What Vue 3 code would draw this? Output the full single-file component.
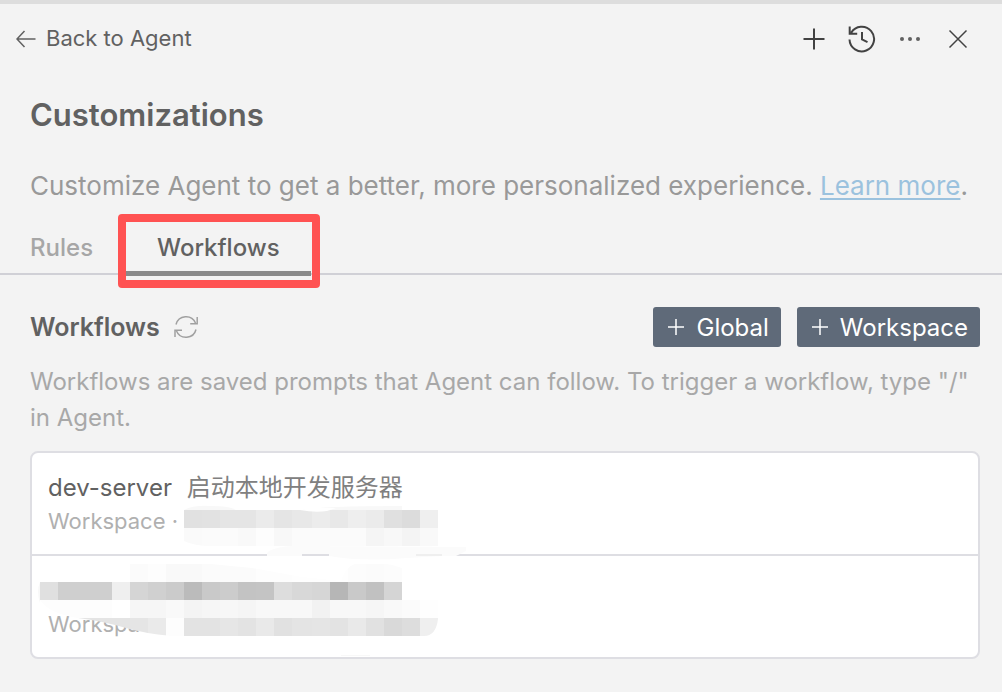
<script setup>
import { ref } from 'vue'

const tab = ref('workflows')

const size = 18
const shades = [
  { row: 0, start: 8, values: ['e1', 'e2', 'e5', 'e5', 'eb', 'e5', 'e8', 'ec', 'e8', 'ee', 'eb', 'e0', 'dc', 'ef'] },
  { row: 1, start: 8, values: ['fa', 'fb', 'fb', 'f9', 'fd', 'f8', 'fb', 'fb', 'fb', 'fb', 'f5', 'f8', 'f4', 'f9'] },
  { row: 3, start: 5, values: ['fb', 'fd', 'f9', 'f9', 'fb', 'fb', 'fb', 'fd', 'fd', 'fe', 'fe', 'fe', 'fc', 'fb', 'fc'] },
  { row: 4, start: 0, values: ['e0', 'cf', 'cf', 'cf', 'ef', 'd5', 'd0', 'cb', 'bb', 'c9', 'cc', 'c3', 'c4', 'dd', 'd8', 'd6', 'b6', 'c9', 'c1', 'd5'] },
  { row: 5, start: 0, values: ['fd', 'fd', 'fd', 'fd', 'ff', 'f6', 'f6', 'f9', 'f4', 'f6', 'f7', 'f5', 'f8', 'f8', 'f8', 'f2', 'f8', 'f8', 'f6', 'f9', 'fb', 'fe'] },
  { row: 6, start: 0, values: ['e4', 'e4', 'e4', 'e4', 'e4', 'e5', 'ea', 'fd', 'e3', 'e3', 'e6', 'e3', 'e9', 'e1', 'e4', 'e5', 'e3', 'e9', 'e1', 'd9', 'dd', 'ef'] },
]
const edge = (c) => 8 + size * c + (c > 14 ? 2 : 0)
const cells = shades.flatMap(({ row, start, values }) =>
  values.map((v, i) => ({
    key: `${row}-${start + i}`,
    x: edge(start + i),
    y: 57 + size * row,
    w: edge(start + i + 1) - edge(start + i),
    fill: `#${v}${v}${v}`,
    clip: row < 2 ? 'url(#patch-a)' : 'url(#patch-b)',
  }))
)
</script>

<template>
  <div class="panel">
    <header class="bar">
      <button class="back" type="button">
        <svg width="20" height="20" viewBox="0 0 20 20"><path d="M19.500 10H1M8.500 2L1 10l7.500 8" /></svg>
        <span>Back to Agent</span>
      </button>
      <div class="actions">
        <button type="button" aria-label="New">
          <svg width="28" height="28" viewBox="0 0 28 28"><path d="M14 3.500v21M3.500 14h21" /></svg>
        </button>
        <button type="button" aria-label="History">
          <svg width="28" height="28" viewBox="0 0 28 28"><path d="M1.500 14.500A12.300 12.300 0 1 0 3.200 7.800M1.700 1.500v7.200h7.500M14 7v7.500l5.500 2.700" /></svg>
        </button>
        <button type="button" aria-label="More">
          <svg class="dots" width="28" height="28" viewBox="0 0 28 28"><circle cx="6" cy="14" r="2" /><circle cx="14" cy="14" r="2" /><circle cx="22" cy="14" r="2" /></svg>
        </button>
        <button type="button" aria-label="Close">
          <svg class="thin" width="28" height="28" viewBox="0 0 28 28"><path d="M5.500 5.500l17 17M22.500 5.500l-17 17" /></svg>
        </button>
      </div>
    </header>

    <h1>Customizations</h1>
    <p class="intro">Customize Agent to get a better, more personalized experience. <a href="#">Learn more</a>.</p>

    <nav class="tabs">
      <button type="button" class="tab" :class="{ active: tab === 'rules' }" @click="tab = 'rules'">Rules</button>
      <button type="button" class="tab marked" :class="{ active: tab === 'workflows' }" @click="tab = 'workflows'">Workflows</button>
    </nav>

    <section>
      <div class="head">
        <h2>Workflows</h2>
        <button class="refresh" type="button" aria-label="Refresh">
          <svg width="24" height="24" viewBox="0 0 24 24"><path d="M2 9.500A10.300 10.300 0 0 1 21.500 8M23.200 2v6.800h-7M22 14.500A10.300 10.300 0 0 1 2.500 16M1 22v-6.800h7" /></svg>
        </button>
        <div class="adders">
          <button type="button"><svg width="16" height="16" viewBox="0 0 16 16"><path d="M8 0v16M0 8h16" /></svg>Global</button>
          <button type="button"><svg width="16" height="16" viewBox="0 0 16 16"><path d="M8 0v16M0 8h16" /></svg>Workspace</button>
        </div>
      </div>
      <p class="hint">Workflows are saved prompts that Agent can follow. To trigger a workflow, type "/" in Agent.</p>

      <div class="list">
        <ul>
          <li>
            <div class="name">dev-server <span>启动本地开发服务器</span></div>
            <div class="meta">Workspace ·</div>
          </li>
          <li>
            <div class="name"></div>
            <div class="meta">Workspace</div>
          </li>
        </ul>
        <svg class="redaction" width="450" height="205" viewBox="0 0 450 205" aria-hidden="true">
          <defs>
            <clipPath id="patch-a">
              <path d="M152 57Q162 53 178 54Q192 54 200 57H268Q283 60 295 58Q304 54 320 55H370V57H406V93H185Q164 94 152 88Z" />
            </clipPath>
            <clipPath id="patch-b">
              <path d="M8 129H98V111Q130 108 168 110L220 115L270 124L309 128Q314 112 326 110Q350 108 370 115V147H406V166Q404 183 392 183H140Q110 180 94 175Q70 168 46 165Q16 160 8 147Z" />
            </clipPath>
          </defs>
          <path fill="#fbfbfb" d="M235 100Q240 94 262 93L434 94V98L424 103H410L375 105Q330 109 297 103V101H270V103H235Z" />
          <path fill="#efefef" d="M384 101H410V103H384Z" />
          <path fill="#f8f8f8" d="M152 57Q162 52 178 53Q198 53 204 57ZM270 57Q290 53 370 53V57ZM8 129Q4 138 8 150ZM309 202H338V203H309Z" />
          <path fill="#ffffff" d="M304 55H268Q283 61 295 58Z" />
          <rect v-for="c in cells" :key="c.key" :x="c.x" :y="c.y" :width="c.w" height="18" :fill="c.fill" :clip-path="c.clip" />
        </svg>
      </div>
    </section>
  </div>
</template>

<style>
body {
  margin: 0;
  background: #f3f3f3;
}
</style>

<style scoped>
.panel {
  min-height: 100vh;
  box-sizing: border-box;
  border-top: 4px solid #dddddd;
  background: #f3f3f3;
  color: #616161;
  font-family: Inter, "Noto Sans CJK SC", sans-serif;
  font-size: 24px;
}
button {
  border: 0;
  padding: 0;
  background: none;
  color: inherit;
  font: inherit;
  cursor: pointer;
}
svg {
  display: block;
  fill: none;
  stroke: currentColor;
  stroke-width: 2;
}
h1, h2, p, ul {
  margin: 0;
}
.bar {
  display: flex;
  align-items: center;
  justify-content: space-between;
  height: 70px;
  padding: 0 30px 0 16px;
}
.back {
  display: flex;
  align-items: center;
  gap: 10px;
  font-size: 22px;
}
.back span {
  padding-bottom: 2px;
}
.back svg,
.thin {
  stroke-width: 1.5;
}
.actions {
  display: flex;
  gap: 20px;
  color: #424242;
}
.dots {
  fill: #616161;
  stroke: none;
}
h1 {
  padding: 22px 30px 0;
  font-size: 31px;
  font-weight: 600;
  line-height: 38px;
}
.intro {
  padding: 34px 30px 0;
  color: #999999;
  font-size: 26px;
  line-height: 36px;
}
.intro a {
  color: #9bc2de;
  text-decoration-thickness: 2px;
  text-underline-offset: 3px;
}
.tabs {
  display: flex;
  gap: 33px;
  height: 71px;
  box-sizing: border-box;
  padding: 14px 30px 0;
  border-bottom: 2px solid #d0d0d6;
}
.tab {
  position: relative;
  height: 58px;
  padding-top: 6px;
  border-bottom: 5px solid transparent;
  color: #a6a6a6;
  font-weight: 500;
}
.tab.active {
  padding-left: 31px;
  padding-right: 31px;
  border-bottom-color: #8a8a8a;
  color: #616161;
}
.marked::after {
  content: "";
  position: absolute;
  inset: -4px -9px -17px -8px;
  border: 8px solid #ff5252;
  border-radius: 4px;
}
section {
  padding: 32px 22px 32px 30px;
}
.head {
  display: flex;
  align-items: center;
  height: 40px;
}
h2 {
  font-size: 25px;
  font-weight: 600;
}
.refresh {
  margin-left: 14px;
  color: #a0a0a0;
}
.refresh svg {
  stroke-width: 1.5;
}
.adders {
  display: flex;
  gap: 16px;
  margin-left: auto;
}
.adders button {
  display: flex;
  align-items: center;
  gap: 12px;
  height: 40px;
  padding: 0 12px 0 15px;
  border-radius: 3px;
  background: #5f6a79;
  color: #ffffff;
}
.adders svg {
  stroke-width: 1.5;
}
.hint {
  padding-top: 17px;
  color: #a8a8a8;
  line-height: 36px;
}
.list {
  position: relative;
  margin-top: 15px;
  border: 2px solid #dedee3;
  border-radius: 8px;
  background: #ffffff;
}
ul {
  padding: 0;
  list-style: none;
}
li {
  height: 101px;
  box-sizing: border-box;
  padding: 17px 16px 0;
}
li + li {
  height: 103px;
  border-top: 2px solid #dedee3;
}
.name {
  height: 36px;
  line-height: 36px;
}
.name span {
  margin-left: 8px;
  color: #808080;
}
.meta {
  color: #b0b0b0;
  font-size: 22px;
  line-height: 30px;
}
.redaction {
  position: absolute;
  left: 0;
  top: 0;
  stroke: none;
}
</style>
